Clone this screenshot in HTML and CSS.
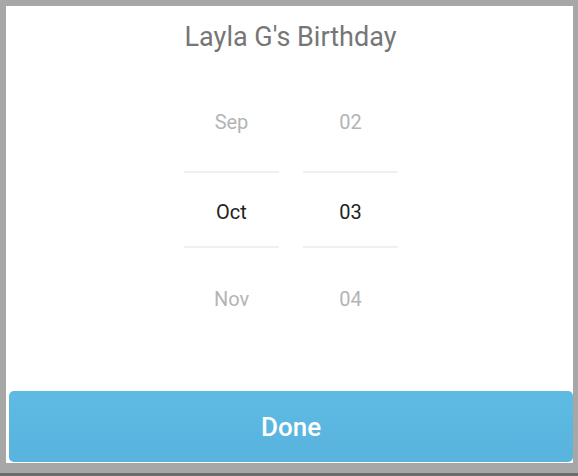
FILE: index.html
```html
<!DOCTYPE html>
<html lang="en">
<head>
<meta charset="utf-8">
<title>Layla G's Birthday</title>
<link rel="stylesheet" href="styles.css">
</head>
<body>
<div class="frame">
  <div class="panel">
    <h1 class="title">Layla G's Birthday</h1>
    <div class="picker">
      <div class="wheel">
        <div class="item dim">Sep</div>
        <div class="item sel">Oct</div>
        <div class="item dim">Nov</div>
      </div>
      <div class="wheel">
        <div class="item dim">02</div>
        <div class="item sel">03</div>
        <div class="item dim">04</div>
      </div>
    </div>
    <button class="done" type="button">Done</button>
  </div>
</div>
<div class="bottom-strip"></div>
</body>
</html>
```

FILE: styles.css
```css
html, body {
  margin: 0;
  padding: 0;
}
body {
  width: 578px;
  height: 476px;
  background: #a7a7a7;
  font-family: Roboto, "Noto Sans", "Liberation Sans", sans-serif;
  display: flex;
  flex-direction: column;
  overflow: hidden;
}
.frame {
  flex: 1;
  padding: 6px 5px 10px 6px;
  display: flex;
}
.panel {
  flex: 1;
  background: #ffffff;
  display: flex;
  flex-direction: column;
  align-items: stretch;
}
.title {
  margin: 15px 0 0;
  font-size: 27px;
  line-height: 32px;
  font-weight: 400;
  color: #767676;
  text-align: center;
  padding-left: 2px;
}
.picker {
  margin-top: 25px;
  display: flex;
  justify-content: center;
  gap: 24px;
  padding-left: 3px;
}
.wheel {
  width: 95px;
  display: flex;
  flex-direction: column;
}
.item {
  height: 88px;
  line-height: 88px;
  text-align: center;
  font-size: 20px;
}
.item.dim {
  color: #b4b4b4;
}
.item.sel {
  box-sizing: border-box;
  height: 77px;
  line-height: 73px;
  padding-top: 3px;
  margin: 5px 0 7px;
  border-top: 2px solid #f0f0f0;
  border-bottom: 2px solid #f0f0f0;
  color: #222222;
}
.done {
  margin: auto 0 1px 3px;
  height: 71px;
  border: 0;
  border-radius: 5px;
  background: linear-gradient(#5dbbe4, #58b3dd);
  color: #ffffff;
  font-family: Roboto, "Noto Sans", "Liberation Sans", sans-serif;
  font-size: 26px;
  font-weight: 500;
  padding: 0;
}
.bottom-strip {
  height: 3px;
  background: #6c6c6c;
}
```
